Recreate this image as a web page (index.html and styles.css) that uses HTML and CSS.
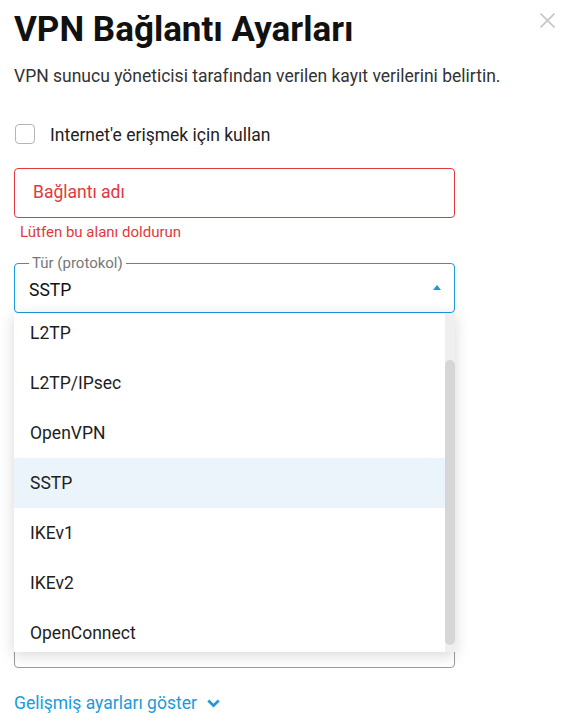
FILE: index.html
```html
<!DOCTYPE html>
<html lang="tr">
<head>
    <meta charset="UTF-8" />
    <meta name="viewport" content="width=device-width, initial-scale=1.0"/>
    <title>VPN Bağlantı Ayarları</title>
    <link rel="stylesheet" href="styles.css">
</head>
<body>
    <div class="dialog">
        <div class="dialog-header">
            <h1>VPN Bağlantı Ayarları</h1>
            <button class="close-btn" aria-label="Kapat">
                <svg width="15" height="15" viewBox="0 0 15 15">
                    <path d="M0.5 0.5 L14.5 14.5 M14.5 0.5 L0.5 14.5" stroke="#c6c6c6" stroke-width="1.6" fill="none"/>
                </svg>
            </button>
        </div>

        <div class="form">
            <p class="subtitle">VPN sunucu yöneticisi tarafından verilen kayıt verilerini belirtin.</p>

            <label class="check-row">
                <span class="checkbox"></span>
                <span class="check-label">Internet'e erişmek için kullan</span>
            </label>

            <div class="field field-error first-field">
                <span class="placeholder">Bağlantı adı</span>
            </div>
            <div class="error-text">Lütfen bu alanı doldurun</div>

            <div class="field select-field">
                <span class="field-label">Tür (protokol)</span>
                <span class="select-value">SSTP</span>
                <span class="select-arrow"></span>

                <div class="dropdown">
                    <div class="dropdown-list">
                        <div class="dropdown-items">
                            <div class="dropdown-item">PPTP</div>
                            <div class="dropdown-item">L2TP</div>
                            <div class="dropdown-item">L2TP/IPsec</div>
                            <div class="dropdown-item">OpenVPN</div>
                            <div class="dropdown-item selected">SSTP</div>
                            <div class="dropdown-item">IKEv1</div>
                            <div class="dropdown-item">IKEv2</div>
                            <div class="dropdown-item">OpenConnect</div>
                        </div>
                    </div>
                    <div class="scroll-track">
                        <div class="scroll-thumb"></div>
                    </div>
                </div>
            </div>

            <!-- fields hidden behind the open list -->
            <div class="field field-gap"></div>
            <div class="field field-gap"></div>
            <div class="field field-gap"></div>
            <div class="field field-gap"></div>
            <div class="field field-gap"></div>

            <a class="advanced-link" href="#">
                Gelişmiş ayarları göster
                <svg width="13" height="9" viewBox="0 0 13 9">
                    <path d="M1.3 1.5 L6.5 6.7 L11.7 1.5" stroke="#1a9bdc" stroke-width="2.6" fill="none"/>
                </svg>
            </a>
        </div>
    </div>
</body>
</html>
```

FILE: styles.css
```css
:root {
    --blue: #1a9bdc;
    --red: #e3383d;
    --text: #222;
    --muted: #777;
}

* {
    box-sizing: border-box;
}

body {
    margin: 0;
    font-family: 'Roboto', 'Liberation Sans', sans-serif;
    background: #fff;
    color: var(--text);
}

.dialog {
    padding: 10px 12px 0 14px;
}

.dialog-header {
    display: flex;
    justify-content: space-between;
    align-items: flex-start;
}

h1 {
    margin: 0;
    font-size: 35px;
    line-height: 40px;
    font-weight: 700;
    color: #111;
}

.close-btn {
    background: none;
    border: none;
    padding: 0;
    margin-top: 3px;
    width: 15px;
    height: 15px;
    cursor: pointer;
}

.close-btn svg {
    display: block;
}

.form {
    width: 441px;
    display: flex;
    flex-direction: column;
}

.subtitle {
    margin: 14px 0 0;
    font-size: 17.5px;
    line-height: 24px;
    color: #333;
    white-space: nowrap;
}

.check-row {
    display: flex;
    align-items: center;
    margin-top: 36px;
    height: 20px;
    cursor: pointer;
}

.checkbox {
    width: 20px;
    height: 20px;
    margin-left: 1px;
    border: 1.5px solid #b5b5b5;
    border-radius: 4px;
}

.check-label {
    margin-left: 15px;
    font-size: 17.5px;
    line-height: 20px;
    padding-top: 1px;
    color: #222;
}

.field {
    position: relative;
    height: 50px;
    border: 1px solid #9a9a9a;
    border-radius: 4px;
    display: flex;
    align-items: center;
    padding: 0 18px;
    font-size: 17.5px;
}

.first-field {
    margin-top: 24px;
}

.field-error {
    border-color: var(--red);
}

.placeholder {
    color: var(--red);
    margin-top: -2px;
}

.error-text {
    margin-top: 4px;
    padding-left: 6px;
    font-size: 15px;
    line-height: 20px;
    color: var(--red);
}

.select-field {
    margin-top: 21px;
    border-color: var(--blue);
    padding: 0 13px 0 14px;
    justify-content: space-between;
}

.field-label {
    position: absolute;
    top: -9px;
    left: 14px;
    padding: 0 3px;
    background: #fff;
    font-size: 15px;
    line-height: 16px;
    color: var(--muted);
}

.select-value {
    color: #111;
    margin-top: 4px;
}

.select-arrow {
    width: 0;
    height: 0;
    border-left: 4px solid transparent;
    border-right: 4px solid transparent;
    border-bottom: 5px solid var(--blue);
    margin-top: -2px;
}

.dropdown {
    position: absolute;
    top: calc(100% + 1px);
    left: -1px;
    right: -1px;
    height: 339px;
    background: #fff;
    box-shadow: 0 3px 14px rgba(0, 0, 0, 0.16);
    display: flex;
    z-index: 10;
}

.dropdown-list {
    flex: 1;
    overflow: hidden;
}

.dropdown-items {
    margin-top: -55px;
}

.dropdown-item {
    height: 50px;
    line-height: 50px;
    padding-left: 16px;
    font-size: 17.5px;
    color: #1e1e1e;
}

.dropdown-item.selected {
    background: #eaf4fa;
}

.scroll-track {
    width: 10px;
    background: #efefef;
}

.scroll-thumb {
    margin-top: 47px;
    height: 285px;
    border-radius: 5px;
    background: #d6d6d6;
}

.field-gap {
    margin-top: 21px;
}

.advanced-link {
    margin-top: 23px;
    display: flex;
    align-items: center;
    gap: 10px;
    font-size: 17.5px;
    line-height: 24px;
    color: var(--blue);
    text-decoration: none;
}

.advanced-link svg {
    display: block;
    margin-top: 1px;
}
```
